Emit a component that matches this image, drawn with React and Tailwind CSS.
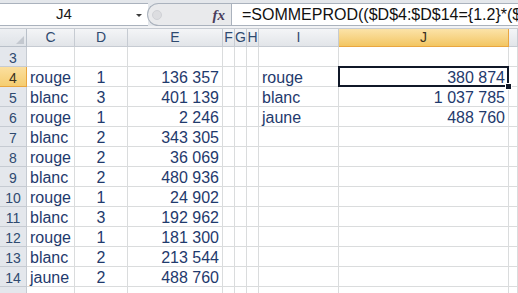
import React from "react";

const rows = [
  { n: 3 },
  { n: 4, c: "rouge", d: "1", e: "136 357", i: "rouge", j: "380 874", sel: true },
  { n: 5, c: "blanc", d: "3", e: "401 139", i: "blanc", j: "1 037 785" },
  { n: 6, c: "rouge", d: "1", e: "2 246", i: "jaune", j: "488 760" },
  { n: 7, c: "blanc", d: "2", e: "343 305" },
  { n: 8, c: "rouge", d: "2", e: "36 069" },
  { n: 9, c: "blanc", d: "2", e: "480 936" },
  { n: 10, c: "rouge", d: "1", e: "24 902" },
  { n: 11, c: "blanc", d: "3", e: "192 962" },
  { n: 12, c: "rouge", d: "1", e: "181 300" },
  { n: 13, c: "blanc", d: "2", e: "213 544" },
  { n: 14, c: "jaune", d: "2", e: "488 760" },
  { n: 15, hide: true },
];

const cols = ["C", "D", "E", "F", "G", "H", "I", "J", ""];

function Cell({ children, align = "left", extra = "" }) {
  const a =
    align === "right"
      ? "justify-end pr-[3px]"
      : align === "center"
      ? "justify-center"
      : "justify-start pl-[3px]";
  return (
    <div
      className={`relative h-[20px] border-r border-b border-[#dadcdd] flex ${a} pt-[1px] leading-[19px] text-[16px] text-[#1f3a6d] whitespace-nowrap ${extra}`}
    >
      {children}
    </div>
  );
}

export default function App() {
  return (
    <div className="w-[518px] h-[293px] overflow-hidden bg-white font-['Liberation_Sans',Arial,sans-serif]">
      {/* toolbar */}
      <div className="h-[26px] bg-[#e4e7eb] flex items-start">
        <div className="mt-[3px] h-[23px] w-[148px] bg-white border-y border-[#aab2bd] flex">
          <div className="flex-1 flex justify-center leading-[20px] text-[15px] text-[#1a1a1a]">
            J4
          </div>
          <div className="w-[20px] flex items-center">
            <svg width="20" height="21" viewBox="0 0 20 21">
              <path d="M8 10 L14 10 L11 13 Z" fill="#3c3c3c" />
            </svg>
          </div>
        </div>
        <div className="mt-[3px] h-[23px] w-[84px] bg-[#e9eaec] border-y border-l border-[#aab2bd] rounded-l-full flex items-center relative -ml-[1px]">
          <div className="ml-[4px] w-[10px] h-[10px] rounded-full bg-[#dcdde0] border border-[#d0d2d6]" />
          <div className="flex-1" />
          <div className="mr-[6px] text-[15px] italic font-bold text-[#4a3d5c] font-['Liberation_Serif',serif] leading-[20px]">
            fx
          </div>
        </div>
        <div className="mt-[3px] h-[23px] flex-1 min-w-0 bg-white border-y border-l border-[#aab2bd] overflow-hidden">
          <div className="pl-[10px] pt-[1px] leading-[20px] text-[16px] text-[#111] whitespace-nowrap">
            =SOMMEPROD(($D$4:$D$14={"{"}1.2{"}"}*($
          </div>
        </div>
      </div>
      <div className="h-[3px] bg-[#f2f3f5] border-b border-[#c6cbd2]" />

      {/* grid */}
      <div className="grid grid-cols-[27px_48px_53px_95px_12px_12px_12px_80px_170px_9px]">
        {/* header row */}
        <div className="relative h-[18px] bg-gradient-to-b from-[#eef0f3] to-[#dfe3e8] border-r border-b border-[#b9c0c9]">
          <svg className="absolute right-[2px] bottom-[2px]" width="8" height="8" viewBox="0 0 8 8">
            <path d="M8 0 L8 8 L0 8 Z" fill="#c3c8cf" />
          </svg>
        </div>
        {cols.map((c, k) =>
          c === "J" ? (
            <div
              key={k}
              className="h-[18px] bg-gradient-to-b from-[#fbe3a8] to-[#f3c661] border-r border-b border-[#e9a640] flex justify-center leading-[17px] text-[14px] text-[#3b3222]"
            >
              {c}
            </div>
          ) : (
            <div
              key={k}
              className="h-[18px] bg-gradient-to-b from-[#f4f5f7] to-[#e2e5e9] border-r border-b border-[#c6cbd2] flex justify-center leading-[17px] text-[14px] text-[#2f4a70]"
            >
              {c}
            </div>
          )
        )}

        {rows.map((r) => (
          <React.Fragment key={r.n}>
            {r.sel ? (
              <div className="h-[20px] bg-gradient-to-b from-[#fbdf9e] to-[#f5cd70] border-r border-b border-[#e9a640] flex justify-center pt-[2px] leading-[19px] text-[14px] text-[#3b3222]">
                {r.n}
              </div>
            ) : (
              <div className="h-[20px] bg-[#e4e7ec] border-r border-b border-[#c6cbd2] flex justify-center pt-[2px] leading-[19px] text-[14px] text-[#2f4a70]">
                {r.hide ? "" : r.n}
              </div>
            )}
            <Cell>{r.c}</Cell>
            <Cell align="center">{r.d}</Cell>
            <Cell align="right">{r.e}</Cell>
            <Cell />
            <Cell />
            <Cell />
            <Cell>{r.i}</Cell>
            <Cell align="right" extra={r.sel ? "z-10" : ""}>
              {r.j}
              {r.sel && (
                <>
                  <div className="absolute -left-[1px] -top-[1px] -right-[1px] -bottom-[1px] border-2 border-[#101828] pointer-events-none" />
                  <div className="absolute -right-[4px] -bottom-[4px] w-[7px] h-[7px] bg-[#101828] border border-white" />
                </>
              )}
            </Cell>
            <Cell />
          </React.Fragment>
        ))}
      </div>
    </div>
  );
}
